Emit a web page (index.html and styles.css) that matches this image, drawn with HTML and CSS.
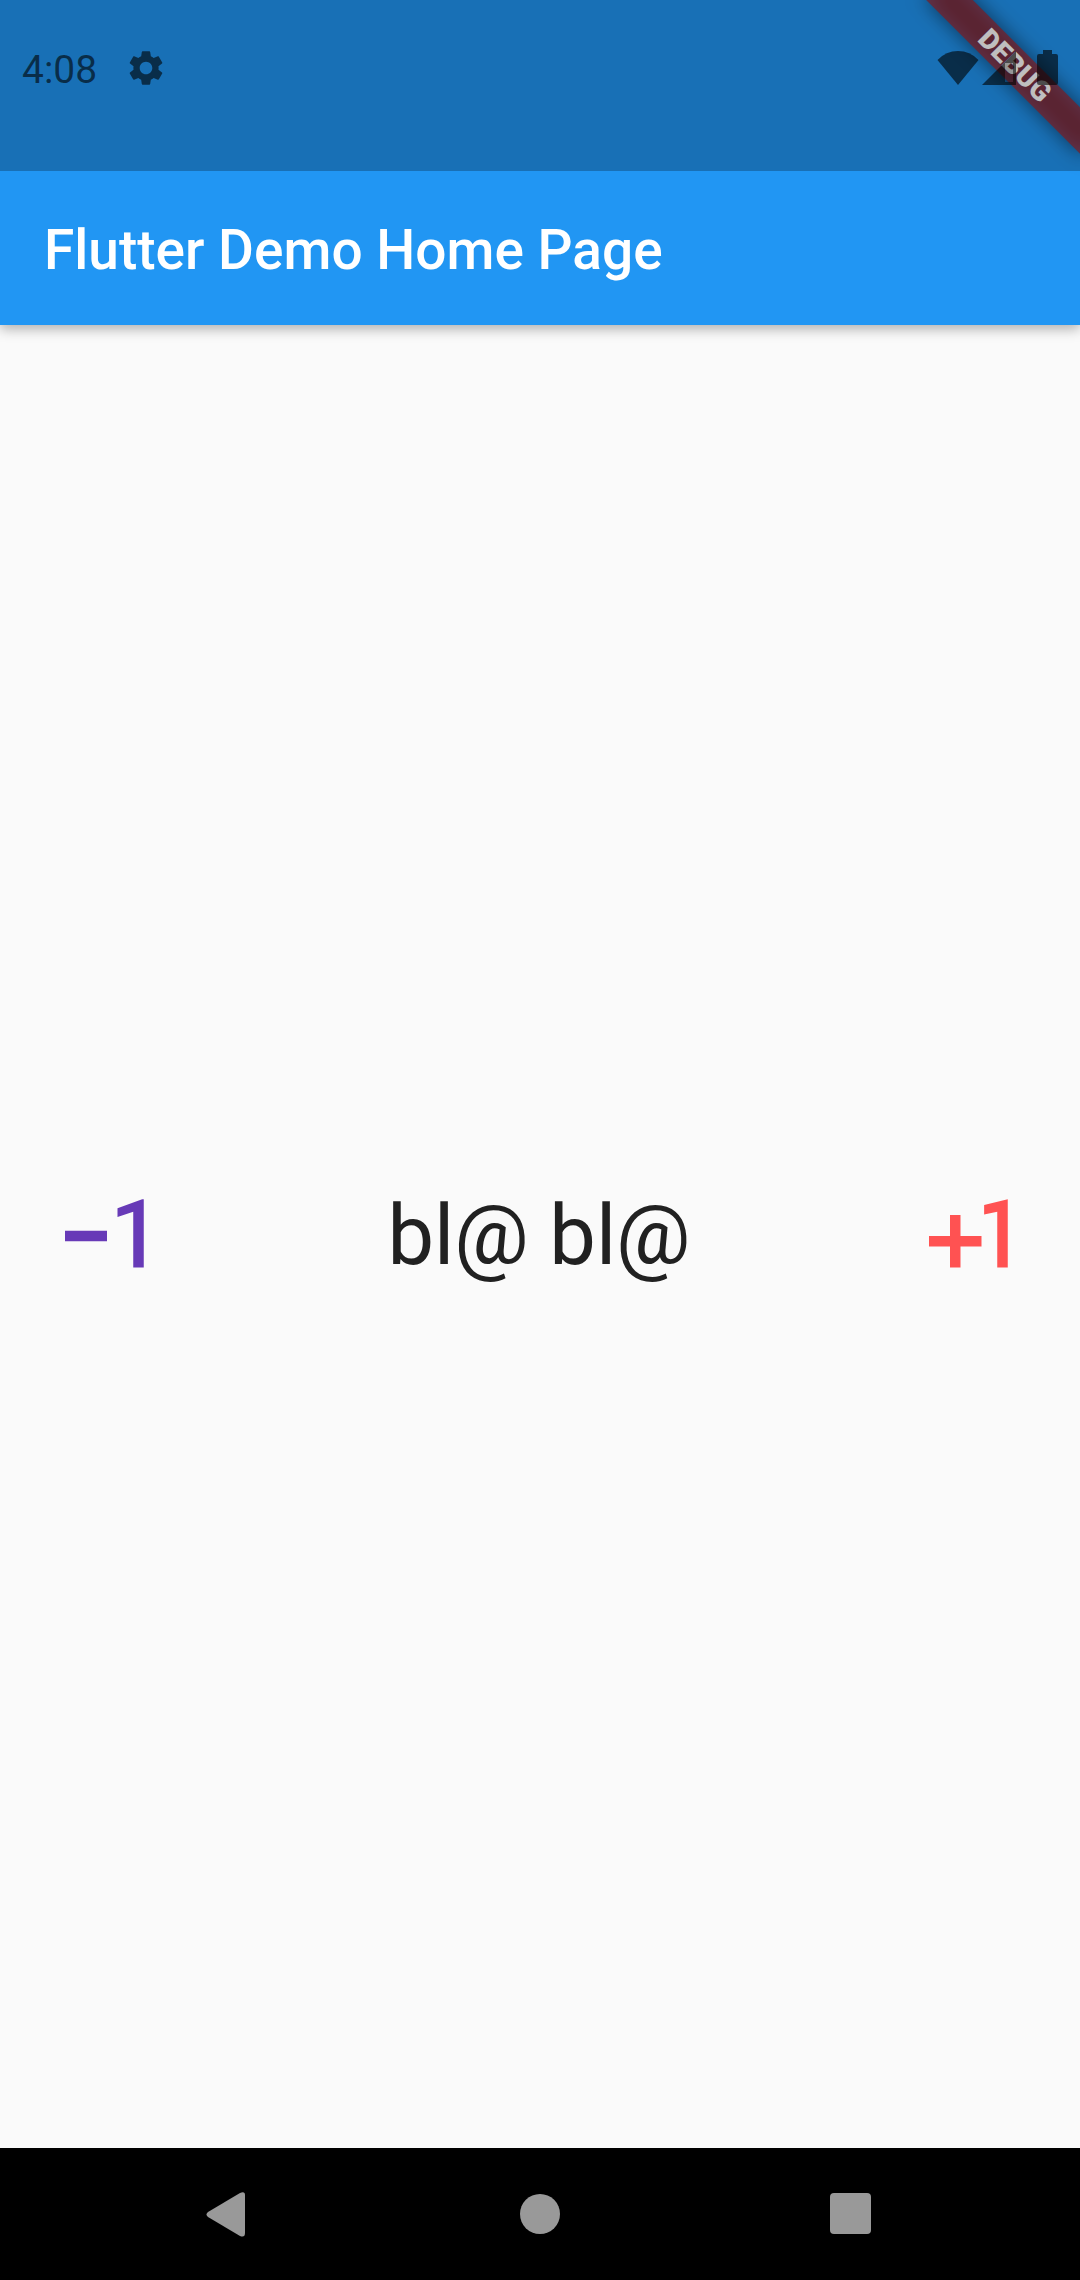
FILE: index.html
```html
<!DOCTYPE html>
<html lang="en">
<head>
<meta charset="utf-8">
<meta name="viewport" content="width=device-width, initial-scale=1">
<title>Flutter Demo</title>
<link rel="stylesheet" href="styles.css">
</head>
<body>
<div class="screen">
  <div class="debug-corner"><div class="debug-banner"><span>DEBUG</span></div></div>
  <div class="status-bar">
    <div class="status-group status-left">
      <span class="clock">4:08</span>
      <svg class="gear" viewBox="0 0 24 24" aria-hidden="true"><path d="M19.14 12.94c.04-.3.06-.61.06-.94 0-.32-.02-.64-.07-.94l2.03-1.58c.18-.14.23-.41.12-.61l-1.92-3.32c-.12-.22-.37-.29-.59-.22l-2.39.96c-.5-.38-1.03-.7-1.62-.94l-.36-2.54c-.04-.24-.24-.41-.48-.41h-3.84c-.24 0-.43.17-.47.41l-.36 2.54c-.59.24-1.13.57-1.62.94l-2.39-.96c-.22-.08-.47 0-.59.22L2.74 8.87c-.12.21-.08.47.12.61l2.03 1.58c-.05.3-.09.63-.09.94s.02.64.07.94l-2.03 1.58c-.18.14-.23.41-.12.61l1.92 3.32c.12.22.37.29.59.22l2.39-.96c.5.38 1.03.7 1.62.94l.36 2.54c.05.24.24.41.48.41h3.84c.24 0 .44-.17.47-.41l.36-2.54c.59-.24 1.13-.56 1.62-.94l2.39.96c.22.08.47 0 .59-.22l1.92-3.32c.12-.22.07-.47-.12-.61l-2.01-1.58zM12 15.6c-1.98 0-3.6-1.62-3.6-3.6s1.62-3.6 3.6-3.6 3.6 1.62 3.6 3.6-1.62 3.6-3.6 3.6z"/></svg>
    </div>
    <div class="status-group status-right">
      <svg class="wifi" viewBox="0 0 42 36" aria-hidden="true"><path d="M21 35L0.500 10Q9 1 21 1T41.500 10Z"/></svg>
      <svg class="signal" viewBox="0 0 36 36" aria-hidden="true"><path fill-rule="evenodd" d="M35 1V35H1ZM24 13V32H32V13Z"/><path opacity=".35" d="M24 13V32H32V13Z"/></svg>
      <svg class="battery" viewBox="0 0 21 36" aria-hidden="true"><path d="M6 0h9v4h4q2 0 2 2v27q0 2-2 2H2q-2 0-2-2V6q0-2 2-2h4z"/></svg>
    </div>
  </div>
  <header class="app-bar"><h1>Flutter Demo Home Page</h1></header>
  <main class="content">
    <button class="icon-button minus" type="button" aria-label="Minus one"><svg viewBox="0 0 24 24" aria-hidden="true"><path d="M4 11v2h8v-2H4zm15 7h-2V7.38L14 8.4V6.7L18.7 5h.3v13z"/></svg></button>
    <p class="label">bl@ bl@</p>
    <button class="icon-button plus" type="button" aria-label="Plus one"><svg viewBox="0 0 24 24" aria-hidden="true"><path d="M10 8H8v4H4v2h4v4h2v-4h4v-2h-4zm4.5-1.92V7.9l2.5-.5V18h2V5z"/></svg></button>
  </main>
  <nav class="nav-bar">
    <button type="button" aria-label="Back"><svg viewBox="0 0 46 46" aria-hidden="true"><path d="M2 21L34 2Q39 0 39 4V42Q39 47 34 45L2 26Q-1 23.500 2 21Z"/></svg></button>
    <button type="button" aria-label="Home"><svg viewBox="0 0 46 46" aria-hidden="true"><circle cx="23" cy="23" r="20"/></svg></button>
    <button type="button" aria-label="Overview"><svg viewBox="0 0 46 46" aria-hidden="true"><rect x="2" y="2" width="41" height="41" rx="4"/></svg></button>
  </nav>
</div>
</body>
</html>
```
FILE: styles.css
```css
* { box-sizing: border-box; }
body {
  margin: 0;
  font-family: Roboto, "Noto Sans", sans-serif;
  background: #fafafa;
}
.screen {
  position: relative;
  display: flex;
  flex-direction: column;
  min-height: 100vh;
}
button {
  display: flex;
  padding: 0;
  border: 0;
  background: none;
  color: inherit;
  cursor: pointer;
}
svg { display: block; fill: currentColor; }

.status-bar {
  position: relative;
  z-index: 3;
  display: flex;
  justify-content: space-between;
  height: 171px;
  padding: 46px 22px 0;
  background: rgba(0, 0, 0, 0.25);
  color: rgba(0, 0, 0, 0.6);
}
.status-group { display: flex; align-items: center; height: 44px; }
.status-left { gap: 28px; }
.clock { padding-top: 4px; font-size: 39px; line-height: 46px; }
.gear { width: 42px; height: 42px; }
.wifi { width: 42px; height: 36px; margin-right: 2px; }
.signal { width: 36px; height: 36px; margin-right: 20px; }
.battery { width: 21px; height: 36px; }

.app-bar {
  z-index: 1;
  display: flex;
  align-items: center;
  height: 325px;
  margin-top: -171px;
  padding: 174px 44px 0;
  background: #2196f3;
  box-shadow: 0 4px 12px rgba(0, 0, 0, 0.3);
  color: #fff;
}
h1 { margin: 0; font-size: 55px; line-height: 64px; font-weight: 500; }

.debug-corner {
  position: absolute;
  z-index: 2;
  top: 0;
  right: 0;
  width: 240px;
  height: 240px;
  overflow: hidden;
}
.debug-banner {
  position: absolute;
  top: 49px;
  right: -45px;
  width: 220px;
  height: 33px;
  transform: rotate(45deg);
  color: #fff;
  font-size: 28px;
  font-weight: 900;
  line-height: 33px;
  text-align: center;
}
.debug-banner::before,
.debug-banner::after {
  content: "";
  position: absolute;
  inset: 0;
}
.debug-banner::before { background: rgba(0, 0, 0, 0.5); filter: blur(10px); }
.debug-banner::after { background: rgba(183, 28, 28, 0.627); }
.debug-banner span { position: relative; z-index: 1; }

.content {
  flex: 1;
  display: flex;
  align-items: center;
  justify-content: space-between;
  padding: 0 46px 2px 44px;
}
.icon-button svg { width: 126px; height: 126px; }
.minus { color: #673ab7; }
.plus { color: #ff5252; }
.label { margin: 0; font-size: 83px; line-height: 96px; color: #212121; }

.nav-bar {
  display: flex;
  align-items: center;
  justify-content: space-between;
  height: 132px;
  padding: 0 206px;
  background: #000;
  color: #999;
}
.nav-bar svg { width: 46px; height: 46px; }
```
